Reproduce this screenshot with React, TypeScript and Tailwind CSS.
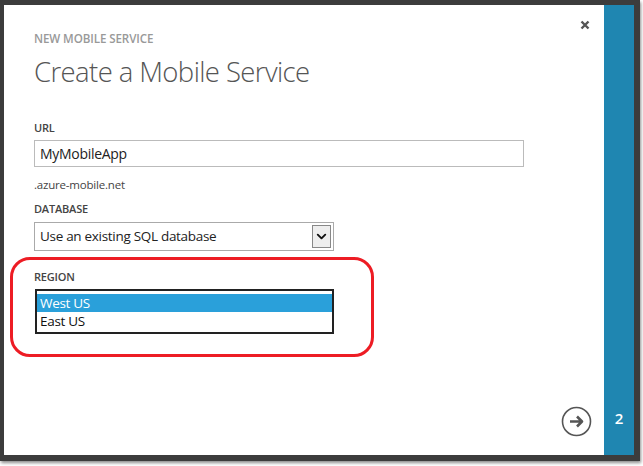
import { ChevronDown } from 'lucide-react'

const font = { fontFamily: '"Open Sans", "Noto Sans", sans-serif' }

function Label({ children }: { children: string }) {
  return <div className="text-[11px] font-semibold text-[#444] leading-[14px] tracking-[-0.2px]">{children}</div>
}

export default function App() {
  return (
    <div className="w-[643px] h-[466px] bg-white" style={font}>
      <div className="w-[640px] h-[461px] bg-[#3c3c3c] pt-[5px] pl-[4px] flex shadow-[1px_2px_3px_rgba(0,0,0,0.45)]">
        {/* Dialog */}
        <div className="w-[600px] h-[450px] bg-white flex flex-col pl-[30px] relative">
          <button className="absolute top-[13px] right-[12px] w-[14px] h-[14px] flex items-center justify-center text-[#555]">
            <svg width="10" height="10" viewBox="0 0 10 10">
              <path d="M1.5 1.5 L8.5 8.5 M8.5 1.5 L1.5 8.5" stroke="currentColor" strokeWidth="2.4" />
            </svg>
          </button>

          <div className="mt-[26px] text-[11.6px] font-semibold text-[#999] leading-[16px] tracking-[-0.1px]">NEW MOBILE SERVICE</div>
          <h1 className="mt-[8px] text-[27.5px] font-light text-[#555] leading-[34px] tracking-[-0.6px]">Create a Mobile Service</h1>

          <div className="mt-[32px]"><Label>URL</Label></div>
          <div className="mt-[5px] w-[490px] h-[27px] border border-[#bbb] flex items-center pl-[5px] text-[14px] text-[#222] tracking-[-0.3px]">
            MyMobileApp
          </div>
          <div className="mt-[10px] text-[11.5px] text-[#444] leading-[16px] tracking-[-0.2px]">.azure-mobile.net</div>

          <div className="mt-[9px]"><Label>DATABASE</Label></div>
          <div className="mt-[6px] w-[300px] h-[29px] border border-[#aaa] flex items-center justify-between pl-[5px] pr-[2px] text-[13.5px] text-[#222] tracking-[-0.3px]">
            <span>Use an existing SQL database</span>
            <span className="w-[19px] h-[23px] bg-[#eee] border border-[#888] flex items-center justify-center">
              <ChevronDown size={15} strokeWidth={3} color="#111" />
            </span>
          </div>

          {/* annotation */}
          <div className="mt-[6px] ml-[-24px] w-[364px] h-[100px] border-[3px] border-[#ed1c24] rounded-[20px] pl-[21px] pt-[10px]">
            <Label>REGION</Label>
            <div className="mt-[5px] ml-[1px] w-[299px] h-[45px] border-2 border-[#222] pt-[3px] text-[13.5px] leading-[18px] tracking-[-0.3px]">
              <div className="bg-[#2aa0da] text-white pl-[3px]">West US</div>
              <div className="text-[#111] pl-[3px]">East US</div>
            </div>
          </div>

          <div className="flex-1" />
          <div className="flex justify-end pr-[12px] pb-[18px]">
            <svg width="31" height="31" viewBox="0 0 31 31">
              <circle cx="15.5" cy="15.5" r="14" fill="none" stroke="#555" strokeWidth="1.6" />
              <path d="M9 15.5 H21 M16 10.5 L21 15.5 L16 20.5" fill="none" stroke="#555" strokeWidth="2.6" strokeLinejoin="round" />
            </svg>
          </div>
        </div>

        {/* Step strip */}
        <div className="w-[30px] h-[450px] bg-[#1f86b1] flex flex-col justify-end items-center pb-[28px]">
          <span className="text-white text-[15px] font-semibold leading-[18px]">2</span>
        </div>
      </div>
    </div>
  )
}
